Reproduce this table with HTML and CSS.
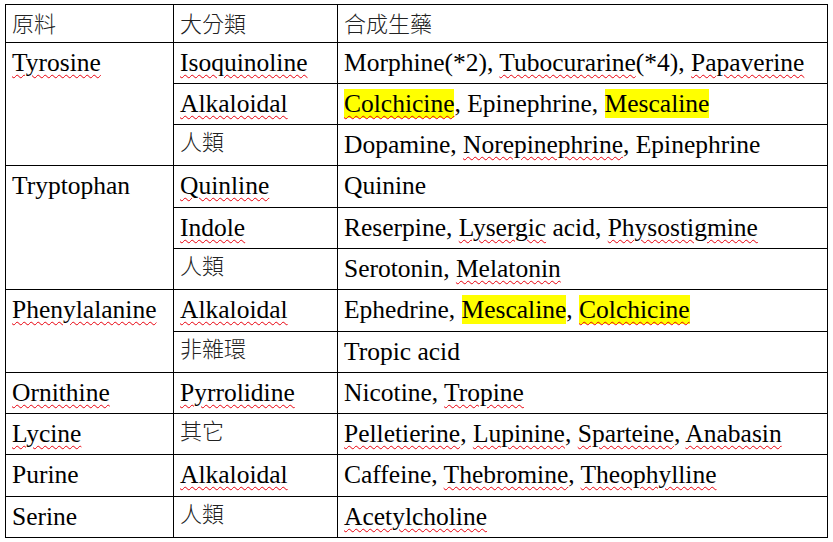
FILE: index.html
```html
<!DOCTYPE html>
<html lang="zh-Hant">
<head>
<meta charset="utf-8">
<title>合成生藥</title>
<link rel="stylesheet" href="styles.css">
</head>
<body>
<div class="sheet">
  <div class="cell head cjk">原料</div>
  <div class="cell head cjk">大分類</div>
  <div class="cell head cjk">合成生藥</div>

  <div class="cell span3"><span class="sp">Tyrosine</span></div>
  <div class="cell"><span class="sp">Isoquinoline</span></div>
  <div class="cell">Morphine(*2), <span class="sp">Tubocurarine</span>(*4), <span class="sp">Papaverine</span></div>
  <div class="cell"><span class="sp">Alkaloidal</span></div>
  <div class="cell"><span class="hl sp">Colchicine</span>, Epinephrine, <span class="hl">Mescaline</span></div>
  <div class="cell cjk">人類</div>
  <div class="cell">Dopamine, <span class="sp">Norepinephrine</span>, Epinephrine</div>

  <div class="cell span3">Tryptophan</div>
  <div class="cell"><span class="sp">Quinline</span></div>
  <div class="cell">Quinine</div>
  <div class="cell"><span class="sp">Indole</span></div>
  <div class="cell">Reserpine, <span class="sp">Lysergic</span> acid, <span class="sp">Physostigmine</span></div>
  <div class="cell cjk">人類</div>
  <div class="cell">Serotonin, <span class="sp">Melatonin</span></div>

  <div class="cell span2"><span class="sp">Phenylalanine</span></div>
  <div class="cell"><span class="sp">Alkaloidal</span></div>
  <div class="cell">Ephedrine, <span class="hl">Mescaline</span>, <span class="hl sp">Colchicine</span></div>
  <div class="cell cjk">非雜環</div>
  <div class="cell">Tropic acid</div>

  <div class="cell"><span class="sp">Ornithine</span></div>
  <div class="cell"><span class="sp">Pyrrolidine</span></div>
  <div class="cell">Nicotine, <span class="sp">Tropine</span></div>

  <div class="cell"><span class="sp">Lycine</span></div>
  <div class="cell cjk">其它</div>
  <div class="cell"><span class="sp">Pelletierine</span>, <span class="sp">Lupinine</span>, <span class="sp">Sparteine</span>, <span class="sp">Anabasin</span></div>

  <div class="cell">Purine</div>
  <div class="cell"><span class="sp">Alkaloidal</span></div>
  <div class="cell">Caffeine, <span class="sp">Thebromine</span>, <span class="sp">Theophylline</span></div>

  <div class="cell">Serine</div>
  <div class="cell cjk">人類</div>
  <div class="cell"><span class="sp">Acetylcholine</span></div>
</div>
</body>
</html>
```

FILE: styles.css
```css
html, body {
  margin: 0;
  padding: 0;
  background: #ffffff;
}

.sheet {
  margin: 4px 0 0 5px;
  width: 823px;
  box-sizing: border-box;
  padding: 1px;
  gap: 1px;
  background: #000000;
  display: grid;
  grid-template-columns: 167px 163px 489px;
  grid-template-rows: 37px 40px 40px 40px 41px 40px 40px 41px 40px 40px 40px 41px 40px;
}

.cell {
  background: #ffffff;
  font-family: "Liberation Serif", "Times New Roman", serif;
  font-size: 25.5px;
  line-height: normal;
  color: #000000;
  padding: 5px 0 0 6px;
  white-space: nowrap;
  overflow: hidden;
}

.span3 { grid-row: span 3; }
.span2 { grid-row: span 2; }

.cjk {
  font-family: "Noto Sans CJK TC", "Noto Sans CJK SC", sans-serif;
  font-size: 22px;
  font-weight: 300;
  line-height: 22px;
  color: #222222;
  padding-top: 4px;
}

.head {
  padding-top: 6px;
}

.sp {
  text-decoration-line: underline;
  text-decoration-style: wavy;
  text-decoration-color: #e8000b;
  text-decoration-thickness: 1px;
  text-underline-offset: 3px;
}

.hl {
  background: #ffff00;
}
```
